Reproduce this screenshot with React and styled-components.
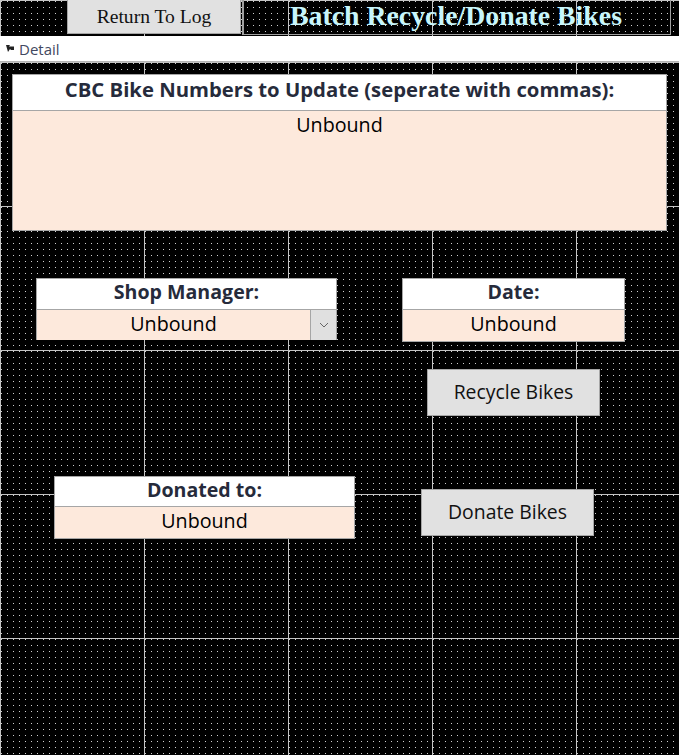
import React from "react";
import styled, { createGlobalStyle } from "styled-components";

const GlobalStyle = createGlobalStyle`
  html, body {
    margin: 0;
    padding: 0;
    background: #000;
  }
  body {
    font-family: "Open Sans", "Noto Sans", sans-serif;
    overflow: hidden;
  }
`;

const Canvas = styled.div`
  width: 679px;
  height: 755px;
  display: flex;
  flex-direction: column;
  overflow: hidden;
`;

// design grid: 1px dots every 6px, light lines every 144px
const Section = styled.div`
  position: relative;
  flex: ${(p) => (p.$grow ? "1" : "none")};
  height: ${(p) => (p.$h ? `${p.$h}px` : "auto")};
  background-color: #000;
  background-image:
    linear-gradient(90deg, #c4c4c4 1px, transparent 1px),
    linear-gradient(180deg, #c4c4c4 1px, transparent 1px),
    conic-gradient(at 1px 1px, transparent 75%, #cfcfcf 0);
  background-size: 144px 144px, 144px 144px, 6px 6px;
  background-position: 0 0, 0 0, 1px 1px;
  background-repeat: repeat;
`;

const SectionBar = styled.div`
  height: 25px;
  flex: none;
  background: #fff;
  border-bottom: 1px solid #b4b4b4;
  display: flex;
  align-items: center;
  gap: 4px;
  padding-left: 5px;
  font-family: "Open Sans", "Noto Sans", sans-serif;
  font-size: 15px;
  color: #424860;
`;

const Placed = styled.div`
  position: absolute;
  left: ${(p) => p.$x}px;
  top: ${(p) => p.$y}px;
  width: ${(p) => p.$w}px;
  box-sizing: border-box;
`;

const SerifButton = styled(Placed)`
  height: ${(p) => p.$h}px;
  background: #e1e1e1;
  border: 1px solid #a6a6a6;
  border-top: none;
  display: flex;
  align-items: center;
  justify-content: center;
  font-family: "Liberation Serif", "Times New Roman", serif;
  font-size: 19.6px;
  color: #111;
`;

const TitleBox = styled(Placed)`
  height: ${(p) => p.$h}px;
  border: 1px solid #a0a0a0;
  border-top: none;
  border-left: 2px solid #a0a0a0;
  display: flex;
  align-items: flex-start;
  padding-left: 46px;
  font-family: "Liberation Serif", "Times New Roman", serif;
  font-weight: 700;
  font-size: 27.8px;
  line-height: 32px;
  color: #c8f6fb;
  white-space: nowrap;
`;

const Field = styled(Placed)`
  border: 1px solid #a6a6a6;
  display: flex;
  flex-direction: column;
  background: #a6a6a6;
  gap: 1px;
`;

const Label = styled.div`
  height: ${(p) => p.$h}px;
  box-sizing: border-box;
  padding-bottom: ${(p) => p.$lift || 4}px;
  background: #fff;
  display: flex;
  align-items: center;
  justify-content: center;
  font-family: "Open Sans", "Noto Sans", sans-serif;
  font-weight: 700;
  font-size: ${(p) => p.$size || 19.6}px;
  line-height: 1;
  color: #262b3b;
  white-space: nowrap;
`;

const Value = styled.div`
  height: ${(p) => p.$h}px;
  box-sizing: border-box;
  padding-bottom: ${(p) => (p.$top ? 0 : 3)}px;
  background: #fde9dc;
  display: flex;
  align-items: ${(p) => (p.$top ? "flex-start" : "center")};
  justify-content: center;
  font-family: "Open Sans", "Noto Sans", sans-serif;
  font-size: 19.7px;
  line-height: 28px;
  color: #000;
`;

const ComboValue = styled.div`
  height: ${(p) => p.$h}px;
  display: grid;
  grid-template-columns: 1fr 25px;
  gap: 1px;
  background: #a6a6a6;
  font-family: "Open Sans", "Noto Sans", sans-serif;
  font-size: 19.7px;
  color: #000;
`;

const ComboText = styled.div`
  background: #fde9dc;
  display: flex;
  align-items: center;
  justify-content: center;
  padding-bottom: 3px;
`;

const ComboButton = styled.div`
  background: #e0e0e0;
  display: flex;
  align-items: center;
  justify-content: center;
`;

const CommandButton = styled(Placed)`
  height: ${(p) => p.$h}px;
  background: #e1e1e1;
  border: 1px solid #a6a6a6;
  display: flex;
  align-items: center;
  justify-content: center;
  padding-bottom: 2px;
  font-family: "Open Sans", "Noto Sans", sans-serif;
  font-size: 19.4px;
  color: #111;
`;

const SectionIcon = () => (
  <svg width="10" height="9" viewBox="0 0 10 9">
    <path d="M1 1 L5 1 L4 2.5 L9 2.5 L9 6 L6 6 L5 5 L3 8 Z" fill="#222" />
  </svg>
);

const Chevron = () => (
  <svg width="10" height="6" viewBox="0 0 10 6">
    <path d="M1 1 L5 5 L9 1" fill="none" stroke="#666" strokeWidth="1" />
  </svg>
);

export default function App() {
  return (
    <Canvas>
      <GlobalStyle />
      <Section $h={36}>
        <SerifButton $x={67} $y={0} $w={174} $h={34}>
          Return To Log
        </SerifButton>
        <TitleBox $x={242} $y={0} $w={429} $h={35}>
          Batch Recycle/Donate Bikes
        </TitleBox>
      </Section>

      <SectionBar>
        <SectionIcon />
        Detail
      </SectionBar>

      <Section $grow>
        <Field $x={12} $y={12} $w={655}>
          <Label $h={35} $lift={6} $size={20.3}>
            CBC Bike Numbers to Update (seperate with commas):
          </Label>
          <Value $h={119} $top>
            Unbound
          </Value>
        </Field>

        <Field $x={36} $y={216} $w={301}>
          <Label $h={30}>Shop Manager:</Label>
          <ComboValue $h={29}>
            <ComboText>Unbound</ComboText>
            <ComboButton>
              <Chevron />
            </ComboButton>
          </ComboValue>
        </Field>

        <Field $x={402} $y={216} $w={223}>
          <Label $h={30}>Date:</Label>
          <Value $h={31}>Unbound</Value>
        </Field>

        <CommandButton $x={427} $y={307} $w={173} $h={47}>
          Recycle Bikes
        </CommandButton>

        <Field $x={54} $y={414} $w={301}>
          <Label $h={29}>Donated to:</Label>
          <Value $h={31}>Unbound</Value>
        </Field>

        <CommandButton $x={421} $y={427} $w={173} $h={47}>
          Donate Bikes
        </CommandButton>
      </Section>
    </Canvas>
  );
}
